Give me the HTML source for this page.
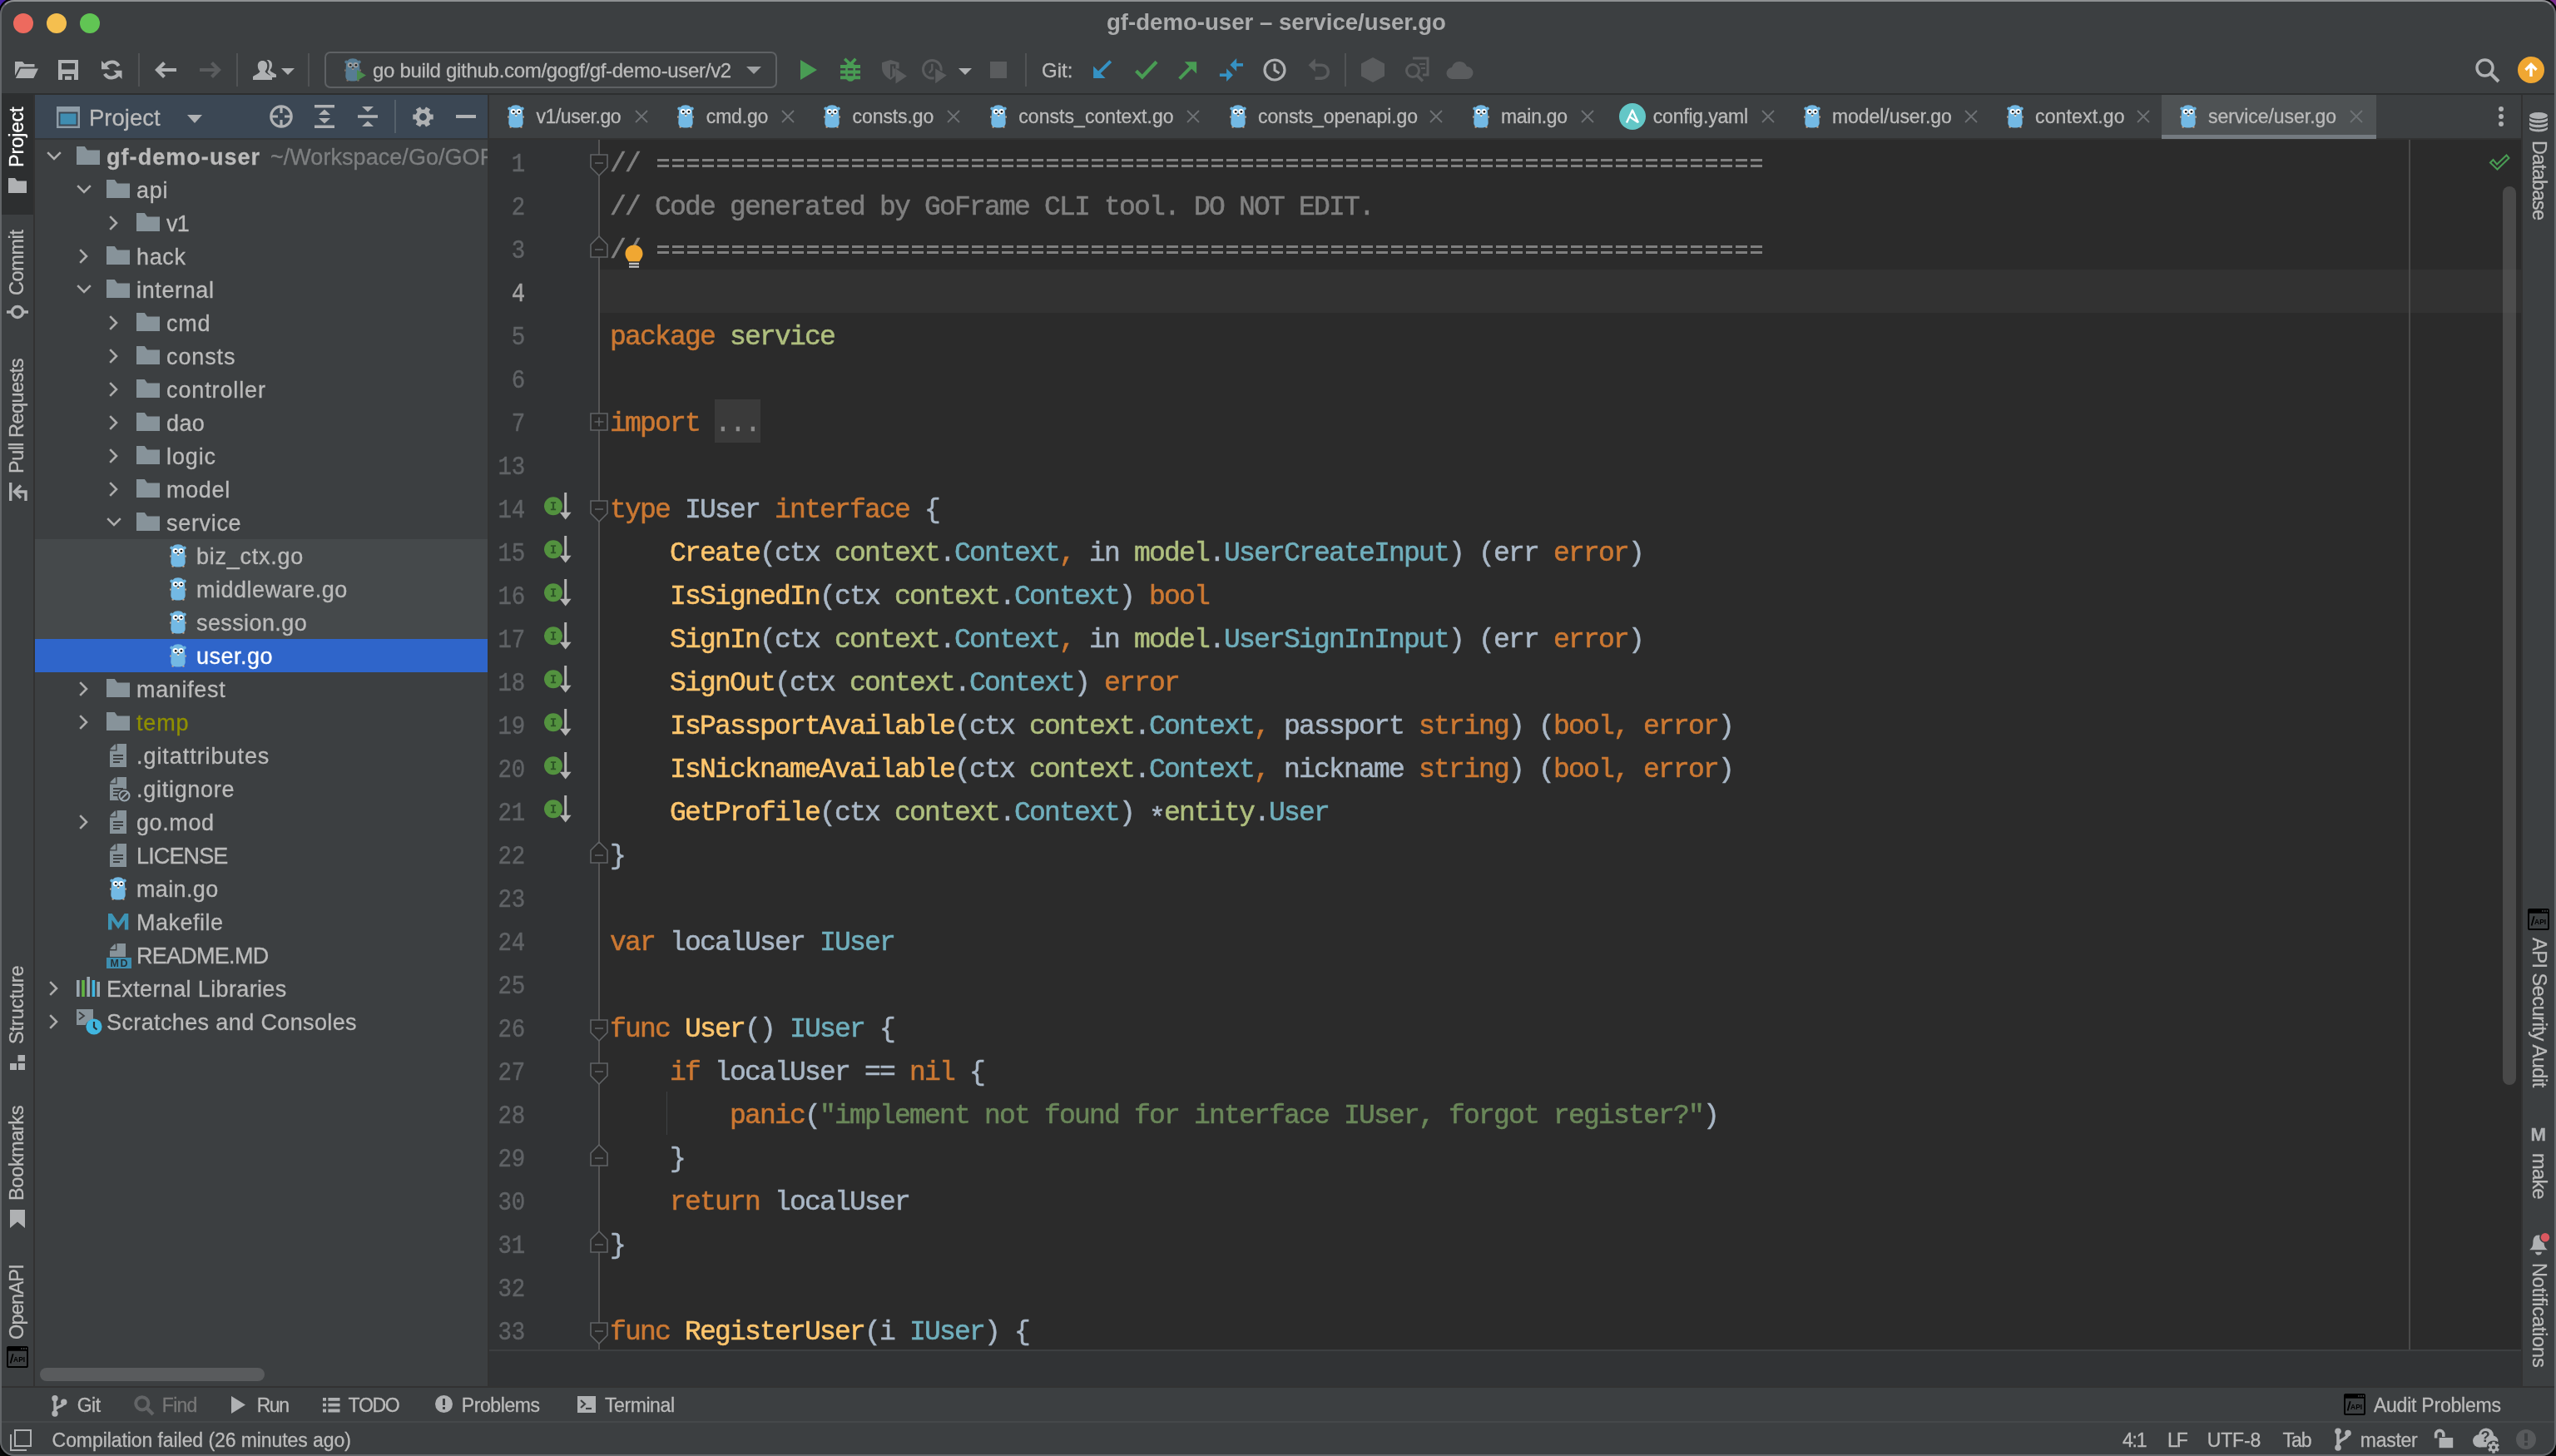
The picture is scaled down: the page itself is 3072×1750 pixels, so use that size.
<!DOCTYPE html><html><head><meta charset="utf-8"><title>gf-demo-user</title><style>
*{box-sizing:border-box;margin:0;padding:0}
html,body{width:3072px;height:1750px;overflow:hidden;background:#0a0a0a}
body{font-family:"Liberation Sans",sans-serif;color:#bbbbbb;position:relative;-webkit-text-stroke:0.3px}
.a{position:absolute}
.t{position:absolute;white-space:pre;line-height:1}
svg{position:absolute;overflow:visible}
#win{position:absolute;left:0;top:0;width:3072px;height:1750px;background:#3c3f41;border-radius:17px;overflow:hidden;will-change:transform}
.code{position:absolute;left:733px;white-space:pre;font-family:"Liberation Mono",monospace;font-size:33px;line-height:52px;height:52px;color:#a9b7c6;letter-spacing:-1.804px;-webkit-text-stroke:0.55px}
.ln{position:absolute;left:586.5px;width:44px;text-align:right;white-space:pre;font-family:"Liberation Mono",monospace;font-size:30.5px;letter-spacing:-0.3px;transform:scaleX(0.9);transform-origin:100% 50%;-webkit-text-stroke:0.4px;line-height:52px;height:52px;color:#606366}
.k{color:#cc7832}.c{color:#808080}.p{color:#afbf7e}.y{color:#6fafbd}.f{color:#ffc66d}.s{color:#6a8759}
.row{position:absolute;left:42px;width:544px;height:40px}
.tt{position:absolute;white-space:pre;font-size:27px;line-height:40px;height:40px;color:#bbbbbb;letter-spacing:0.3px;margin-top:0.6px}
.tab{position:absolute;white-space:pre;font-size:23px;line-height:52px;height:52px;top:114px;color:#bbbbbb}
.st{position:absolute;white-space:pre;font-size:22px;line-height:1;color:#bbbbbb;transform-origin:0 0}
</style></head><body>
<svg width="0" height="0" style="position:absolute"><defs>
<symbol id="gopher" viewBox="0 0 20 28">
<circle cx="2.3" cy="4.6" r="2" fill="#6db4de"/><circle cx="17.7" cy="4.6" r="2" fill="#6db4de"/>
<ellipse cx="0.9" cy="14.6" rx="0.9" ry="1.4" fill="#c9a78c"/><ellipse cx="19.1" cy="14.6" rx="0.9" ry="1.4" fill="#c9a78c"/>
<ellipse cx="3.7" cy="26.7" rx="1.3" ry="1.1" fill="#c9a78c"/><ellipse cx="16.4" cy="26.7" rx="1.3" ry="1.1" fill="#c9a78c"/>
<path d="M1.8,11 C1.8,3.2 5,0.2 10,0.2 C15,0.2 18.2,3.2 18.2,11 L18.7,21.5 C18.7,26 15.2,27.6 10,27.6 C4.8,27.6 1.3,26 1.3,21.5 Z" fill="#73b9e4"/>
<circle cx="6.8" cy="8.1" r="3.1" fill="#fff"/><circle cx="13.5" cy="8.1" r="3.1" fill="#fff"/>
<circle cx="7.2" cy="8.3" r="1.3" fill="#000"/><circle cx="13.9" cy="8.3" r="1.3" fill="#000"/>
<ellipse cx="10.2" cy="12.7" rx="1.5" ry="1.1" fill="#e6d2b4"/>
<ellipse cx="10.2" cy="11.4" rx="1.2" ry="0.9" fill="#3a2e2a"/>
<rect x="9.6" y="12.8" width="1.2" height="1.2" fill="#fff"/>
</symbol>
<symbol id="folder" viewBox="0 0 28 22"><path d="M0,0 H9.8 L13,4.4 H28 V22 H0 Z" fill="#87939a"/></symbol>
<symbol id="file" viewBox="0 0 20 28"><path d="M8,0 H20 V28 H0 V8 Z" fill="#87939a"/><path d="M0,6.6 L6.6,0 V6.6 Z" fill="#87939a"/><path d="M7.2,0 V7.2 H0 V8.6 H8.6 V0 Z" fill="#3c3f41"/>
<rect x="4" y="13" width="12" height="2" fill="#3c3f41"/><rect x="4" y="17" width="12" height="2" fill="#3c3f41"/><rect x="4" y="21" width="8" height="2" fill="#3c3f41"/></symbol>
<symbol id="chv-d" viewBox="0 0 18 11"><path d="M1.2,1.2 L9,9 L16.8,1.2" fill="none" stroke="#adadad" stroke-width="2.6"/></symbol>
<symbol id="chv-r" viewBox="0 0 11 18"><path d="M1.2,1.2 L9,9 L1.2,16.8" fill="none" stroke="#adadad" stroke-width="2.6"/></symbol>
<symbol id="x" viewBox="0 0 16 16"><path d="M1,1 L15,15 M15,1 L1,15" stroke="#6e7275" stroke-width="1.8" fill="none"/></symbol>
<symbol id="impl" viewBox="0 0 34 34">
<circle cx="11" cy="16.2" r="11" fill="#53923f"/>
<path d="M7.9,11.2 H14.1 V13 H12.1 V19.4 H14.1 V21.2 H7.9 V19.4 H9.9 V13 H7.9 Z" fill="#2c5426"/>
<path d="M25.7,0 V25" stroke="#b4b4b4" stroke-width="3"/><path d="M18.8,23.8 H32.6 L25.7,32.6 Z" fill="#b4b4b4"/>
</symbol>
<symbol id="fold-s" viewBox="0 0 22 27"><path d="M1,1 H21 V16 L11,26 L1,16 Z" fill="#2b2b2b" stroke="#606366" stroke-width="1.6"/><path d="M6,11 H16" stroke="#606366" stroke-width="1.6"/></symbol>
<symbol id="fold-e" viewBox="0 0 22 27"><path d="M1,26 H21 V11 L11,1 L1,11 Z" fill="#2b2b2b" stroke="#606366" stroke-width="1.6"/><path d="M6,17 H16" stroke="#606366" stroke-width="1.6"/></symbol>
<symbol id="fold-p" viewBox="0 0 22 22"><path d="M1,1 H21 V21 H1 Z" fill="#2b2b2b" stroke="#606366" stroke-width="1.6"/><path d="M5.5,11 H16.5 M11,5.5 V16.5" stroke="#606366" stroke-width="1.6"/></symbol>
<symbol id="api" viewBox="0 0 26 26"><rect x="1" y="1" width="24" height="24" rx="1.6" fill="none" stroke="#000" stroke-width="2"/><rect x="0.4" y="0.4" width="25.2" height="5.4" rx="1" fill="#000"/>
<rect x="17.2" y="2.2" width="1.5" height="1.5" fill="#55585a"/><rect x="20" y="2.2" width="1.5" height="1.5" fill="#55585a"/><rect x="22.8" y="2.2" width="1.5" height="1.5" fill="#55585a"/>
<path d="M4.6,20.4 L7.7,9.3" stroke="#000" stroke-width="1.8"/>
<text x="8.1" y="18.7" font-family="Liberation Sans" font-weight="700" font-size="9.6" fill="#000" textLength="14" lengthAdjust="spacingAndGlyphs" style="-webkit-text-stroke:0">API</text></symbol>
</defs></svg>
<div class="a" style="left:0;top:0;width:30px;height:30px;background:#4520a2"></div>
<div class="a" style="left:3042px;top:0;width:30px;height:30px;background:#7a2d8f"></div>
<div id="win">
<div class="a" style="left:16px;top:16px;width:24px;height:24px;border-radius:50%;background:#ed6a5e"></div>
<div class="a" style="left:56px;top:16px;width:24px;height:24px;border-radius:50%;background:#f5bf4f"></div>
<div class="a" style="left:96px;top:16px;width:24px;height:24px;border-radius:50%;background:#61c554"></div>
<div class="t" id="title" style="left:1330px;top:13px;font-size:27.6px;font-weight:700;color:#abacad;-webkit-text-stroke:0">gf-demo-user – service/user.go</div>
<svg style="left:18px;top:74px" width="28" height="20" viewBox="0 0 28 20"><path d="M0,0 H9 L11.5,3 H23.5 V6.5 H5.5 L0,17 Z" fill="#afb1b3"/><path d="M6.8,8.5 H28 L22.3,20 H0.8 Z" fill="#afb1b3"/></svg>
<svg style="left:70px;top:72px" width="24" height="24" viewBox="0 0 24 24"><path d="M0,0 H24 V24 H19 V17 H5 V24 H0 Z M4,4 V11.5 H20 V4 Z" fill="#afb1b3" fill-rule="evenodd"/><rect x="8" y="19.5" width="8" height="4.5" fill="#afb1b3"/></svg>
<svg style="left:122px;top:72px" width="24.5" height="24" viewBox="0 0 24.5 24"><path d="M3.4,10.2 A9.3,9.3 0 0 1 20.6,7.2" fill="none" stroke="#afb1b3" stroke-width="4.2"/><path d="M21.1,13.8 A9.3,9.3 0 0 1 3.9,16.8" fill="none" stroke="#afb1b3" stroke-width="4.2"/><path d="M0,1 V11.2 H10.2 Z" fill="#afb1b3"/><path d="M24.5,23 V12.8 H14.3 Z" fill="#afb1b3"/></svg>
<div class="a" style="left:166px;top:64px;width:2px;height:40px;background:#515355"></div>
<svg style="left:186px;top:74px" width="26" height="20" viewBox="0 0 26 20"><path d="M26,10 H3.5 M11.5,1.4 L3,10 L11.5,18.6" fill="none" stroke="#afb1b3" stroke-width="4.2"/></svg>
<svg style="left:240px;top:74px" width="26" height="20" viewBox="0 0 26 20"><path d="M0,10 H22.5 M14.5,1.4 L23,10 L14.5,18.6" fill="none" stroke="#5a5c5e" stroke-width="4.2"/></svg>
<div class="a" style="left:284px;top:64px;width:2px;height:40px;background:#515355"></div>
<svg style="left:304px;top:72px" width="28" height="24" viewBox="0 0 28 24"><path d="M17.5,0 C21,0 23,2.5 23,6 C23,9 21.8,11 20.5,12 C21,14.5 24,15 28,17.5 V21 H22 C21.5,17 17.5,16.3 17.4,14 C19,12 19.6,9.5 19.6,6.5 C19.6,3.5 18.6,1.5 16.5,0.3 Z" fill="#afb1b3"/><path d="M11.5,1 C15.2,1 17.2,3.6 17.2,7 C17.2,10.2 16,12.3 14.6,13.5 C15,16.5 19,17 23,20 V24 H0 V20 C4,17 8,16.5 8.4,13.5 C7,12.3 5.8,10.2 5.8,7 C5.8,3.6 7.8,1 11.5,1 Z" fill="#afb1b3"/></svg>
<svg style="left:338px;top:82px" width="16" height="8" viewBox="0 0 16 8"><path d="M0,0 H16 L8,8 Z" fill="#afb1b3"/></svg>
<div class="a" style="left:370px;top:64px;width:2px;height:40px;background:#515355"></div>
<div class="a" style="left:390px;top:62px;width:544px;height:44px;border:2px solid #5e6164;border-radius:7px"></div>
<svg style="left:414px;top:70px;opacity:.5" width="20" height="28"><use href="#gopher"/></svg>
<svg style="left:429px;top:84px" width="11" height="13" viewBox="0 0 11 13"><path d="M0,0 L11,6.5 L0,13 Z" fill="#4a8a4e"/></svg>
<div class="t" id="runcfg" style="left:448px;top:71px;font-size:24px;line-height:28px;letter-spacing:-0.3px">go build github.com/gogf/gf-demo-user/v2</div>
<svg style="left:897px;top:80px" width="18" height="9" viewBox="0 0 18 9"><path d="M0,0 H18 L9,9 Z" fill="#9da0a2"/></svg>
<svg style="left:962px;top:72px" width="20" height="24" viewBox="0 0 20 24"><path d="M0,0 L20,12 L0,24 Z" fill="#499c54"/></svg>
<svg style="left:1010px;top:70px" width="24" height="28" viewBox="0 0 24 28"><path d="M5.2,0.7 L12,7.4 L18.4,0.7" stroke="#499c54" stroke-width="3.6" fill="none"/><path d="M6.2,12 C6.2,7.5 9,5.2 12.1,5.2 C15.2,5.2 18,7.5 18,12 V21 C18,25.6 15.2,27.8 12.1,27.8 C9,27.8 6.2,25.6 6.2,21 Z" fill="#499c54"/><path d="M0,10 H24 M0,16.6 H24 M0,23.2 H24" stroke="#499c54" stroke-width="4"/><path d="M8.8,13.3 H15.4 M8.8,19.9 H15.4" stroke="#3c3f41" stroke-width="2.6"/></svg>
<svg style="left:1059.7px;top:71.8px" width="30" height="29" viewBox="0 0 30 29"><path d="M0,3.2 L10.3,0 L20.6,3.2 V10.5 H16.5 V19 L10.3,24 C4,20 0,15.5 0,9 Z" fill="#5a5c5e"/><path d="M10,5.2 H16.5 V10.4 H14 V7.6 H12.4 V19.6 L10,21.2 Z" fill="#3c3f41"/><path d="M16.5,10.6 L30,19.4 L16.5,28.4 Z" fill="#5a5c5e"/></svg>
<svg style="left:1107.8px;top:70.7px" width="32" height="30" viewBox="0 0 32 30"><circle cx="12.3" cy="12.3" r="10.8" fill="none" stroke="#5a5c5e" stroke-width="3"/><path d="M12.3,5.8 V12.6 L8.8,16.8" fill="none" stroke="#5a5c5e" stroke-width="2.4"/><path d="M14.6,9 L32,19.5 L14.6,30 Z" fill="#3c3f41"/><path d="M16.2,11.6 L29.8,19.5 L16.2,29.2 Z" fill="#5a5c5e"/></svg>
<svg style="left:1152px;top:82px" width="16" height="8" viewBox="0 0 16 8"><path d="M0,0 H16 L8,8 Z" fill="#afb1b3"/></svg>
<div class="a" style="left:1190px;top:74px;width:20px;height:20px;background:#5a5c5e"></div>
<div class="a" style="left:1232px;top:64px;width:2px;height:40px;background:#515355"></div>
<div class="t" id="gitlbl" style="left:1252px;top:72px;font-size:24px;line-height:26px">Git:</div>
<svg style="left:0;top:0" width="3072" height="120" viewBox="0 0 3072 120"><path d="M1334.8,73.6 L1320.5,87.6" stroke="#3592c4" stroke-width="4" fill="none"/><path d="M1314.1,79.5 V94.1 H1328.6 Z" fill="#3592c4"/><path d="M1365.5,85.3 L1372.8,92.4 L1390,74.2" stroke="#499c54" stroke-width="4.2" fill="none"/><path d="M1417.6,94.6 L1432,80.2" stroke="#499c54" stroke-width="4" fill="none"/><path d="M1423.6,74.2 H1438.1 V88.6 Z" fill="#499c54"/><path d="M1494,77.9 H1484" stroke="#3592c4" stroke-width="3.6" fill="none"/><path d="M1478.4,77.9 L1486.2,70 V85.8 Z" fill="#3592c4"/><path d="M1465.9,90.2 H1476" stroke="#3592c4" stroke-width="3.6" fill="none"/><path d="M1481.9,90.2 L1474.1,82.3 V98.1 Z" fill="#3592c4"/><path d="M1580,78.3 H1588.5 A7.9,7.9 0 0 1 1588.5,94.1 H1580.5" stroke="#5a5c5e" stroke-width="3.6" fill="none"/><path d="M1572.5,78.3 L1580.9,70.3 V86.3 Z" fill="#5a5c5e"/></svg>
<svg style="left:1518px;top:70px" width="28" height="28" viewBox="0 0 28 28"><circle cx="14" cy="14" r="12" fill="none" stroke="#afb1b3" stroke-width="3.2"/><path d="M14,6.5 V14.5 L19.5,18" fill="none" stroke="#afb1b3" stroke-width="3"/></svg>
<div class="a" style="left:1616px;top:64px;width:2px;height:40px;background:#515355"></div>
<svg style="left:1636px;top:69px" width="28" height="30" viewBox="0 0 28 30"><path d="M14,0 L28,7.5 V22.5 L14,30 L0,22.5 V7.5 Z" fill="#5a5c5e"/></svg>
<svg style="left:1688px;top:70px" width="28" height="28" viewBox="0 0 28 28"><path d="M10,0 H28 V20 H22" fill="none" stroke="#5a5c5e" stroke-width="3"/><circle cx="10" cy="15" r="7.5" fill="none" stroke="#5a5c5e" stroke-width="3"/><path d="M15,20.5 L22,27.5" stroke="#5a5c5e" stroke-width="3.4"/><path d="M18,7 H25 M20,12 H25" stroke="#5a5c5e" stroke-width="2"/></svg>
<svg style="left:1738px;top:73px" width="32" height="22" viewBox="0 0 32 22"><path d="M8,22 A7,7 0 0 1 7,8 A9.5,9.5 0 0 1 25,7 A7.5,7.5 0 0 1 25,22 Z" fill="#5a5c5e"/></svg>
<svg style="left:2975px;top:70px" width="30" height="30" viewBox="0 0 30 30"><circle cx="11.5" cy="11.5" r="9.5" fill="none" stroke="#afb1b3" stroke-width="3.4"/><path d="M18.5,18.5 L28,28" stroke="#afb1b3" stroke-width="4"/></svg>
<div class="a" style="left:3026px;top:68px;width:32px;height:32px;border-radius:50%;background:#f0a732"></div>
<svg style="left:3033px;top:75px" width="18" height="18" viewBox="0 0 18 18"><path d="M9,17 V3 M2.5,9 L9,2.5 L15.5,9" fill="none" stroke="#fff" stroke-width="3.4"/></svg>
<div class="a" style="left:0;top:112px;width:3072px;height:2px;background:#2d2f30"></div>
<div class="a" style="left:0;top:114px;width:40px;height:1552px;background:#3c3f41"></div>
<div class="a" style="left:40px;top:114px;width:2px;height:1552px;background:#323232"></div>
<div class="a" style="left:2px;top:114px;width:38px;height:144px;background:#2d2f30"></div>
<div class="st" id="sl1" style="left:9px;top:200.8px;transform:rotate(-90deg);font-size:23.5px;letter-spacing:-0.091px;color:#ffffff">Project</div>
<svg style="left:10px;top:214px" width="22" height="18" viewBox="0 0 22 18"><path d="M0,0 H8 L10.5,3.5 H22 V18 H0 Z" fill="#afb1b3"/></svg>
<div class="st" id="sl2" style="left:9px;top:354.5px;transform:rotate(-90deg);font-size:23.5px;letter-spacing:-0.407px;color:#bbbbbb">Commit</div>
<svg style="left:8px;top:366px" width="26" height="18" viewBox="0 0 26 18"><circle cx="13" cy="9" r="6.5" fill="none" stroke="#afb1b3" stroke-width="3.4"/><path d="M0,9 H6.5 M19.5,9 H26" stroke="#afb1b3" stroke-width="3.4"/></svg>
<div class="st" id="sl3" style="left:9px;top:568.5px;transform:rotate(-90deg);font-size:23.5px;letter-spacing:-0.538px;color:#bbbbbb">Pull Requests</div>
<svg style="left:11px;top:580px" width="22" height="22" viewBox="0 0 22 22"><path d="M0,0 H3.4 V22 H0 Z" fill="#afb1b3"/><path d="M20,22 V11 H8" fill="none" stroke="#afb1b3" stroke-width="3.4"/><path d="M14,3.5 L6.5,11 L14,18.5" fill="none" stroke="#afb1b3" stroke-width="3.4"/></svg>
<div class="st" id="sl4" style="left:9px;top:1254.5px;transform:rotate(-90deg);font-size:23.5px;letter-spacing:-0.094px;color:#bbbbbb">Structure</div>
<svg style="left:12px;top:1268px" width="18" height="18" viewBox="0 0 18 18"><rect x="9.5" y="0" width="8.5" height="7.5" fill="#afb1b3"/><rect x="0" y="10" width="8" height="8" fill="#afb1b3"/><rect x="10" y="10" width="8" height="8" fill="#afb1b3"/></svg>
<div class="st" id="sl5" style="left:9px;top:1442.5px;transform:rotate(-90deg);font-size:23.5px;letter-spacing:-0.393px;color:#bbbbbb">Bookmarks</div>
<svg style="left:12px;top:1454px" width="18" height="22" viewBox="0 0 18 22"><path d="M0,0 H18 V22 L9,14.5 L0,22 Z" fill="#afb1b3"/></svg>
<div class="st" id="sl6" style="left:9px;top:1609.5px;transform:rotate(-90deg);font-size:23.5px;letter-spacing:-0.767px;color:#bbbbbb">OpenAPI</div>
<svg style="left:8px;top:1618px" width="26" height="26"><use href="#api"/></svg>
<div class="a" style="left:42px;top:114px;width:544px;height:52px;background:#3b4754"></div>
<div class="a" style="left:42px;top:166px;width:544px;height:2px;background:#323537"></div>
<div class="a" style="left:586px;top:114px;width:2px;height:1552px;background:#323232"></div>
<svg style="left:68px;top:128px" width="28" height="26" viewBox="0 0 28 26"><rect x="0" y="0" width="28" height="26" fill="#8e9ca7"/><rect x="2.5" y="6.5" width="23" height="17" fill="#3b4754"/><rect x="4.5" y="8.5" width="19" height="13" fill="#3f8db1"/></svg>
<div class="t" id="projhdr" style="left:107px;top:126.5px;font-size:27.5px;line-height:30px">Project</div>
<svg style="left:225px;top:138px" width="18" height="10" viewBox="0 0 18 10"><path d="M0,0 H18 L9,10 Z" fill="#afb1b3"/></svg>
<svg style="left:324px;top:126px" width="28" height="28" viewBox="0 0 28 28"><circle cx="14" cy="14" r="12.2" fill="none" stroke="#afb1b3" stroke-width="3.2"/><path d="M14,1 V10 M14,18 V27 M1,14 H10 M18,14 H27" stroke="#afb1b3" stroke-width="3.2"/></svg>
<svg style="left:378px;top:126px" width="24" height="28" viewBox="0 0 24 28"><path d="M0,0 H24 V3.6 H0 Z M0,24.4 H24 V28 H0 Z" fill="#afb1b3"/><path d="M5,12 H19 L12,5.5 Z M5,16 H19 L12,22.5 Z" fill="#afb1b3"/></svg>
<svg style="left:430px;top:126px" width="24" height="28" viewBox="0 0 24 28"><path d="M0,12.2 H24 V15.8 H0 Z" fill="#afb1b3"/><path d="M5,2 H19 L12,8.5 Z M5,26 H19 L12,19.5 Z" fill="#afb1b3"/></svg>
<div class="a" style="left:474px;top:120px;width:2px;height:40px;background:#55606a"></div>
<svg style="left:495.5px;top:127.5px" width="25" height="25" viewBox="-13.3 -13.3 26.6 26.6"><circle cx="0" cy="0" r="7.2" fill="none" stroke="#afb1b3" stroke-width="5"/><rect x="-3.2" y="-13" width="6.4" height="6" fill="#afb1b3" transform="rotate(30)"/><rect x="-3.2" y="-13" width="6.4" height="6" fill="#afb1b3" transform="rotate(90)"/><rect x="-3.2" y="-13" width="6.4" height="6" fill="#afb1b3" transform="rotate(150)"/><rect x="-3.2" y="-13" width="6.4" height="6" fill="#afb1b3" transform="rotate(210)"/><rect x="-3.2" y="-13" width="6.4" height="6" fill="#afb1b3" transform="rotate(270)"/><rect x="-3.2" y="-13" width="6.4" height="6" fill="#afb1b3" transform="rotate(330)"/></svg>
<div class="a" style="left:548px;top:138px;width:24px;height:4px;background:#afb1b3"></div>
<div class="a" style="left:42px;top:648px;width:544px;height:120px;background:#45494b"></div>
<div class="a" style="left:42px;top:768px;width:544px;height:40px;background:#2f65ca"></div>
<div class="a" id="tree" style="left:0;top:0;width:586px;height:1666px;overflow:hidden">
<svg style="left:56px;top:182px" width="18" height="11"><use href="#chv-d"/></svg>
<svg style="left:92px;top:176px" width="28" height="22"><use href="#folder"/></svg>
<div class="tt" id="tr0" style="left:128px;top:168px;color:#bbbbbb;"><b style="letter-spacing:1.05px">gf-demo-user</b><span style="color:#7d7f80;letter-spacing:0.05px;margin-left:4.3px"> ~/Workspace/Go/GOPATH</span></div>
<svg style="left:92px;top:222px" width="18" height="11"><use href="#chv-d"/></svg>
<svg style="left:128px;top:216px" width="28" height="22"><use href="#folder"/></svg>
<div class="tt" id="tr1" style="left:164px;top:208px;color:#bbbbbb;letter-spacing:0.690px;">api</div>
<svg style="left:131px;top:259px" width="11" height="18"><use href="#chv-r"/></svg>
<svg style="left:164px;top:256px" width="28" height="22"><use href="#folder"/></svg>
<div class="tt" id="tr2" style="left:200px;top:248px;color:#bbbbbb;letter-spacing:-0.708px;">v1</div>
<svg style="left:95px;top:299px" width="11" height="18"><use href="#chv-r"/></svg>
<svg style="left:128px;top:296px" width="28" height="22"><use href="#folder"/></svg>
<div class="tt" id="tr3" style="left:164px;top:288px;color:#bbbbbb;letter-spacing:0.617px;">hack</div>
<svg style="left:92px;top:342px" width="18" height="11"><use href="#chv-d"/></svg>
<svg style="left:128px;top:336px" width="28" height="22"><use href="#folder"/></svg>
<div class="tt" id="tr4" style="left:164px;top:328px;color:#bbbbbb;letter-spacing:0.631px;">internal</div>
<svg style="left:131px;top:379px" width="11" height="18"><use href="#chv-r"/></svg>
<svg style="left:164px;top:376px" width="28" height="22"><use href="#folder"/></svg>
<div class="tt" id="tr5" style="left:200px;top:368px;color:#bbbbbb;letter-spacing:0.797px;">cmd</div>
<svg style="left:131px;top:419px" width="11" height="18"><use href="#chv-r"/></svg>
<svg style="left:164px;top:416px" width="28" height="22"><use href="#folder"/></svg>
<div class="tt" id="tr6" style="left:200px;top:408px;color:#bbbbbb;letter-spacing:0.894px;">consts</div>
<svg style="left:131px;top:459px" width="11" height="18"><use href="#chv-r"/></svg>
<svg style="left:164px;top:456px" width="28" height="22"><use href="#folder"/></svg>
<div class="tt" id="tr7" style="left:200px;top:448px;color:#bbbbbb;letter-spacing:0.885px;">controller</div>
<svg style="left:131px;top:499px" width="11" height="18"><use href="#chv-r"/></svg>
<svg style="left:164px;top:496px" width="28" height="22"><use href="#folder"/></svg>
<div class="tt" id="tr8" style="left:200px;top:488px;color:#bbbbbb;letter-spacing:0.417px;">dao</div>
<svg style="left:131px;top:539px" width="11" height="18"><use href="#chv-r"/></svg>
<svg style="left:164px;top:536px" width="28" height="22"><use href="#folder"/></svg>
<div class="tt" id="tr9" style="left:200px;top:528px;color:#bbbbbb;letter-spacing:0.894px;">logic</div>
<svg style="left:131px;top:579px" width="11" height="18"><use href="#chv-r"/></svg>
<svg style="left:164px;top:576px" width="28" height="22"><use href="#folder"/></svg>
<div class="tt" id="tr10" style="left:200px;top:568px;color:#bbbbbb;letter-spacing:0.652px;">model</div>
<svg style="left:128px;top:622px" width="18" height="11"><use href="#chv-d"/></svg>
<svg style="left:164px;top:616px" width="28" height="22"><use href="#folder"/></svg>
<div class="tt" id="tr11" style="left:200px;top:608px;color:#bbbbbb;letter-spacing:0.683px;">service</div>
<svg style="left:204px;top:654px" width="20" height="28"><use href="#gopher"/></svg>
<div class="tt" id="tr12" style="left:236px;top:648px;color:#bbbbbb;letter-spacing:0.743px;">biz_ctx.go</div>
<svg style="left:204px;top:694px" width="20" height="28"><use href="#gopher"/></svg>
<div class="tt" id="tr13" style="left:236px;top:688px;color:#bbbbbb;letter-spacing:0.477px;">middleware.go</div>
<svg style="left:204px;top:734px" width="20" height="28"><use href="#gopher"/></svg>
<div class="tt" id="tr14" style="left:236px;top:728px;color:#bbbbbb;letter-spacing:0.402px;">session.go</div>
<svg style="left:204px;top:774px" width="20" height="28"><use href="#gopher"/></svg>
<div class="tt" id="tr15" style="left:236px;top:768px;color:#ffffff;letter-spacing:0.476px;">user.go</div>
<svg style="left:95px;top:819px" width="11" height="18"><use href="#chv-r"/></svg>
<svg style="left:128px;top:816px" width="28" height="22"><use href="#folder"/></svg>
<div class="tt" id="tr16" style="left:164px;top:808px;color:#bbbbbb;letter-spacing:0.657px;">manifest</div>
<svg style="left:95px;top:859px" width="11" height="18"><use href="#chv-r"/></svg>
<svg style="left:128px;top:856px" width="28" height="22"><use href="#folder"/></svg>
<div class="tt" id="tr17" style="left:164px;top:848px;color:#bbbbbb;letter-spacing:0.819px;"><span style="color:#8f8f00">temp</span></div>
<svg style="left:132px;top:894px" width="20" height="28"><use href="#file"/></svg>
<div class="tt" id="tr18" style="left:164px;top:888px;color:#bbbbbb;letter-spacing:0.945px;">.gitattributes</div>
<svg style="left:132px;top:934px" width="20" height="28"><use href="#file"/></svg>
<svg style="left:140.6px;top:948.4px" width="17" height="17" viewBox="0 0 17 17"><circle cx="8.5" cy="8.5" r="8.5" fill="#3c3f41"/><circle cx="8.5" cy="8.5" r="6" fill="none" stroke="#9aa7b0" stroke-width="2"/><path d="M4.2,12.8 L12.8,4.2" stroke="#9aa7b0" stroke-width="2"/></svg>
<div class="tt" id="tr19" style="left:164px;top:928px;color:#bbbbbb;letter-spacing:0.723px;">.gitignore</div>
<svg style="left:95px;top:979px" width="11" height="18"><use href="#chv-r"/></svg>
<svg style="left:132px;top:974px" width="20" height="28"><use href="#file"/></svg>
<div class="tt" id="tr20" style="left:164px;top:968px;color:#bbbbbb;letter-spacing:0.590px;">go.mod</div>
<svg style="left:132px;top:1014px" width="20" height="28"><use href="#file"/></svg>
<div class="tt" id="tr21" style="left:164px;top:1008px;color:#bbbbbb;letter-spacing:-0.863px;">LICENSE</div>
<svg style="left:132px;top:1054px" width="20" height="28"><use href="#gopher"/></svg>
<div class="tt" id="tr22" style="left:164px;top:1048px;color:#bbbbbb;letter-spacing:0.349px;">main.go</div>
<svg style="left:129.6px;top:1098px" width="24.3" height="19.6" viewBox="0 0 25 19.4" preserveAspectRatio="none"><path d="M0,19.4 V0 H4.8 L12.5,10.8 L20.2,0 H25 V19.4 H20.4 V7.6 L12.5,18.2 L4.6,7.6 V19.4 Z" fill="#3d94b5"/></svg>
<div class="tt" id="tr23" style="left:164px;top:1088px;color:#bbbbbb;letter-spacing:0.495px;">Makefile</div>
<svg style="left:128px;top:1134px" width="30" height="30" viewBox="0 0 30 30"><path d="M12,0 H23 V16 H4 V8 Z" fill="#87939a"/><path d="M4,6.5 L10.5,0 V6.5 Z" fill="#87939a"/><path d="M11,0 V7 H4 V8.4 H12.4 V0 Z" fill="#3c3f41"/><rect x="0" y="17" width="30" height="13" fill="#3e8eb0"/><text x="15" y="28" font-family="Liberation Sans" font-weight="700" font-size="12.5" text-anchor="middle" fill="#263238" textLength="21">MD</text></svg>
<div class="tt" id="tr24" style="left:164px;top:1128px;color:#bbbbbb;letter-spacing:-0.734px;">README.MD</div>
<svg style="left:59px;top:1179px" width="11" height="18"><use href="#chv-r"/></svg>
<svg style="left:92px;top:1174px" width="28" height="26" viewBox="0 0 28 26"><rect x="0" y="4" width="3.6" height="20" fill="#9aa7b0"/><rect x="6.2" y="4" width="3.6" height="20" fill="#62b543"/><rect x="12.4" y="0" width="3.6" height="24" fill="#9aa7b0"/><rect x="18.6" y="4" width="3.6" height="20" fill="#40b6e0"/><rect x="24.4" y="6" width="3.6" height="18" fill="#9aa7b0"/></svg>
<div class="tt" id="tr25" style="left:128px;top:1168px;color:#bbbbbb;letter-spacing:0.361px;">External Libraries</div>
<svg style="left:59px;top:1219px" width="11" height="18"><use href="#chv-r"/></svg>
<svg style="left:92px;top:1213px" width="32" height="32" viewBox="0 0 32 32"><path d="M0,0 H20 V12 C14,13 11,17 11,19 H0 Z" fill="#87939a"/><path d="M3,3.5 L9,8 L3,12.5" fill="none" stroke="#3c3f41" stroke-width="1.8"/><circle cx="21" cy="21" r="9.6" fill="#40b6e0"/><path d="M21,15 V21.5 L24.5,24.5" fill="none" stroke="#263238" stroke-width="2.2"/></svg>
<div class="tt" id="tr26" style="left:128px;top:1208px;color:#bbbbbb;letter-spacing:0.379px;">Scratches and Consoles</div>
</div>
<div class="a" style="left:48px;top:1644px;width:270px;height:16px;border-radius:8px;background:#595b5d"></div>
<div class="a" style="left:588px;top:114px;width:2442px;height:52px;background:#3c3f41"></div>
<div class="a" style="left:588px;top:166px;width:2442px;height:2px;background:#323232"></div>
<div class="a" style="left:2598px;top:114px;width:258px;height:52px;background:#4e5254"></div>
<div class="a" style="left:2598px;top:162px;width:258px;height:5px;background:#747a80"></div>
<svg style="left:610.0px;top:126px" width="20" height="28"><use href="#gopher"/></svg>
<div class="tab" id="tab0" style="left:644.5px;letter-spacing:-0.443px">v1/user.go</div>
<svg style="left:762.7px;top:132px" width="16" height="16"><use href="#x"/></svg>
<svg style="left:814.3px;top:126px" width="20" height="28"><use href="#gopher"/></svg>
<div class="tab" id="tab1" style="left:848.8px;letter-spacing:-0.171px">cmd.go</div>
<svg style="left:938.5px;top:132px" width="16" height="16"><use href="#x"/></svg>
<svg style="left:990.1px;top:126px" width="20" height="28"><use href="#gopher"/></svg>
<div class="tab" id="tab2" style="left:1024.6px;letter-spacing:-0.094px">consts.go</div>
<svg style="left:1138.0px;top:132px" width="16" height="16"><use href="#x"/></svg>
<svg style="left:1189.8px;top:126px" width="20" height="28"><use href="#gopher"/></svg>
<div class="tab" id="tab3" style="left:1224.3px;letter-spacing:0.053px">consts_context.go</div>
<svg style="left:1426.0px;top:132px" width="16" height="16"><use href="#x"/></svg>
<svg style="left:1477.5px;top:126px" width="20" height="28"><use href="#gopher"/></svg>
<div class="tab" id="tab4" style="left:1512px;letter-spacing:-0.065px">consts_openapi.go</div>
<svg style="left:1718.3px;top:132px" width="16" height="16"><use href="#x"/></svg>
<svg style="left:1769.5px;top:126px" width="20" height="28"><use href="#gopher"/></svg>
<div class="tab" id="tab5" style="left:1804px;letter-spacing:-0.289px">main.go</div>
<svg style="left:1900.0px;top:132px" width="16" height="16"><use href="#x"/></svg>
<div class="a" style="left:1945.8px;top:124px;width:32px;height:32px;border-radius:50%;background:#63c7c7"></div>
<svg style="left:1951.8px;top:130px" width="20" height="20" viewBox="0 0 20 20"><path d="M3,17.6 L10,2.6 L17,17.6 M6.6,10.2 L16.6,17" fill="none" stroke="#fff" stroke-width="2.4" stroke-linejoin="round"/></svg>
<div class="tab" id="tab6" style="left:1986.8px;letter-spacing:-0.202px">config.yaml</div>
<svg style="left:2116.5px;top:132px" width="16" height="16"><use href="#x"/></svg>
<svg style="left:2167.5px;top:126px" width="20" height="28"><use href="#gopher"/></svg>
<div class="tab" id="tab7" style="left:2202px;letter-spacing:-0.060px">model/user.go</div>
<svg style="left:2360.5px;top:132px" width="16" height="16"><use href="#x"/></svg>
<svg style="left:2411.5px;top:126px" width="20" height="28"><use href="#gopher"/></svg>
<div class="tab" id="tab8" style="left:2446px;letter-spacing:0.147px">context.go</div>
<svg style="left:2568.0px;top:132px" width="16" height="16"><use href="#x"/></svg>
<svg style="left:2619.5px;top:126px" width="20" height="28"><use href="#gopher"/></svg>
<div class="tab" id="tab9" style="left:2654px;letter-spacing:-0.046px">service/user.go</div>
<svg style="left:2824.0px;top:132px" width="16" height="16"><use href="#x"/></svg>
<div class="a" style="left:3002.5px;top:128px;width:6px;height:6px;border-radius:50%;background:#afb1b3"></div>
<div class="a" style="left:3002.5px;top:137px;width:6px;height:6px;border-radius:50%;background:#afb1b3"></div>
<div class="a" style="left:3002.5px;top:146.2px;width:6px;height:6px;border-radius:50%;background:#afb1b3"></div>
<div class="a" style="left:588px;top:168px;width:132px;height:1454px;background:#313335"></div>
<div class="a" style="left:720px;top:168px;width:2310px;height:1454px;background:#2b2b2b"></div>
<div class="a" style="left:720px;top:324px;width:2310px;height:52px;background:#323232"></div>
<div class="a" style="left:588px;top:1622px;width:2442px;height:44px;background:#313335"></div>
<div class="a" style="left:588px;top:1622px;width:2442px;height:1.5px;background:#3d3f41"></div>
<div class="a" style="left:719px;top:168px;width:2px;height:1454px;background:#555555"></div>
<div class="a" style="left:2895px;top:168px;width:2px;height:1454px;background:#4a4a4a"></div>
<div class="a" style="left:3008px;top:224px;width:16px;height:1080px;border-radius:8px;background:rgba(128,128,128,0.35)"></div>
<svg style="left:2991px;top:185px" width="26" height="20" viewBox="0 0 26 20"><path d="M2,10.5 L5.5,7 L10,12.5 L21.5,1.5 L24.5,5 L10.5,18.5 Z" fill="none" stroke="#499c54" stroke-width="2"/></svg>
<div class="a" style="left:859px;top:480px;width:55px;height:52px;background:#3a3a3a"></div>
<div class="a" style="left:801px;top:1312px;width:1px;height:52px;background:#3f4244"></div>
<div class="a" id="ed" style="left:0;top:0;width:3030px;height:1622px;overflow:hidden">
<div class="ln" style="top:172px;color:#606366">1</div>
<div class="code" id="L1" style="top:172px"><span class="c">// </span></div>
<div class="ln" style="top:224px;color:#606366">2</div>
<div class="code" id="L2" style="top:224px"><span class="c">// Code generated by GoFrame CLI tool. DO NOT EDIT.</span></div>
<div class="ln" style="top:276px;color:#606366">3</div>
<div class="code" id="L3" style="top:276px"><span class="c">// </span></div>
<div class="ln" style="top:328px;color:#a4a3a3">4</div>
<div class="ln" style="top:380px;color:#606366">5</div>
<div class="code" id="L5" style="top:380px"><span class="k">package</span> <span class="p">service</span></div>
<div class="ln" style="top:432px;color:#606366">6</div>
<div class="ln" style="top:484px;color:#606366">7</div>
<div class="code" id="L7" style="top:484px"><span class="k">import</span> <span style="color:#8c8c8c">...</span></div>
<div class="ln" style="top:536px;color:#606366">13</div>
<div class="ln" style="top:588px;color:#606366">14</div>
<div class="code" id="L14" style="top:588px"><span class="k">type</span> IUser <span class="k">interface</span> {</div>
<svg style="left:654px;top:592px" width="34" height="34"><use href="#impl"/></svg>
<div class="ln" style="top:640px;color:#606366">15</div>
<div class="code" id="L15" style="top:640px">    <span class="f">Create</span>(ctx <span class="p">context</span>.<span class="y">Context</span><span class="k">,</span> in <span class="p">model</span>.<span class="y">UserCreateInput</span>) (err <span class="k">error</span>)</div>
<svg style="left:654px;top:644px" width="34" height="34"><use href="#impl"/></svg>
<div class="ln" style="top:692px;color:#606366">16</div>
<div class="code" id="L16" style="top:692px">    <span class="f">IsSignedIn</span>(ctx <span class="p">context</span>.<span class="y">Context</span>) <span class="k">bool</span></div>
<svg style="left:654px;top:696px" width="34" height="34"><use href="#impl"/></svg>
<div class="ln" style="top:744px;color:#606366">17</div>
<div class="code" id="L17" style="top:744px">    <span class="f">SignIn</span>(ctx <span class="p">context</span>.<span class="y">Context</span><span class="k">,</span> in <span class="p">model</span>.<span class="y">UserSignInInput</span>) (err <span class="k">error</span>)</div>
<svg style="left:654px;top:748px" width="34" height="34"><use href="#impl"/></svg>
<div class="ln" style="top:796px;color:#606366">18</div>
<div class="code" id="L18" style="top:796px">    <span class="f">SignOut</span>(ctx <span class="p">context</span>.<span class="y">Context</span>) <span class="k">error</span></div>
<svg style="left:654px;top:800px" width="34" height="34"><use href="#impl"/></svg>
<div class="ln" style="top:848px;color:#606366">19</div>
<div class="code" id="L19" style="top:848px">    <span class="f">IsPassportAvailable</span>(ctx <span class="p">context</span>.<span class="y">Context</span><span class="k">,</span> passport <span class="k">string</span>) (<span class="k">bool,</span> <span class="k">error</span>)</div>
<svg style="left:654px;top:852px" width="34" height="34"><use href="#impl"/></svg>
<div class="ln" style="top:900px;color:#606366">20</div>
<div class="code" id="L20" style="top:900px">    <span class="f">IsNicknameAvailable</span>(ctx <span class="p">context</span>.<span class="y">Context</span><span class="k">,</span> nickname <span class="k">string</span>) (<span class="k">bool,</span> <span class="k">error</span>)</div>
<svg style="left:654px;top:904px" width="34" height="34"><use href="#impl"/></svg>
<div class="ln" style="top:952px;color:#606366">21</div>
<div class="code" id="L21" style="top:952px">    <span class="f">GetProfile</span>(ctx <span class="p">context</span>.<span class="y">Context</span>) <span style="position:relative;top:7px">*</span><span class="p">entity</span>.<span class="y">User</span></div>
<svg style="left:654px;top:956px" width="34" height="34"><use href="#impl"/></svg>
<div class="ln" style="top:1004px;color:#606366">22</div>
<div class="code" id="L22" style="top:1004px">}</div>
<div class="ln" style="top:1056px;color:#606366">23</div>
<div class="ln" style="top:1108px;color:#606366">24</div>
<div class="code" id="L24" style="top:1108px"><span class="k">var</span> localUser <span class="y">IUser</span></div>
<div class="ln" style="top:1160px;color:#606366">25</div>
<div class="ln" style="top:1212px;color:#606366">26</div>
<div class="code" id="L26" style="top:1212px"><span class="k">func</span> <span class="f">User</span>() <span class="y">IUser</span> {</div>
<div class="ln" style="top:1264px;color:#606366">27</div>
<div class="code" id="L27" style="top:1264px">    <span class="k">if</span> localUser == <span class="k">nil</span> {</div>
<div class="ln" style="top:1316px;color:#606366">28</div>
<div class="code" id="L28" style="top:1316px">        <span class="k">panic</span>(<span class="s">&quot;implement not found for interface IUser, forgot register?&quot;</span>)</div>
<div class="ln" style="top:1368px;color:#606366">29</div>
<div class="code" id="L29" style="top:1368px">    }</div>
<div class="ln" style="top:1420px;color:#606366">30</div>
<div class="code" id="L30" style="top:1420px">    <span class="k">return</span> localUser</div>
<div class="ln" style="top:1472px;color:#606366">31</div>
<div class="code" id="L31" style="top:1472px">}</div>
<div class="ln" style="top:1524px;color:#606366">32</div>
<div class="ln" style="top:1576px;color:#606366">33</div>
<div class="code" id="L33" style="top:1576px"><span class="k">func</span> <span class="f">RegisterUser</span>(i <span class="y">IUser</span>) {</div>
<div class="a" style="left:788px;top:190.9px;width:1332px;height:3.2px;background:repeating-linear-gradient(90deg,transparent 0,transparent 2.1px,#808080 2.1px,#808080 15.95px,transparent 15.95px,transparent 18px)"></div>
<div class="a" style="left:788px;top:197.9px;width:1332px;height:3.2px;background:repeating-linear-gradient(90deg,transparent 0,transparent 2.1px,#808080 2.1px,#808080 15.95px,transparent 15.95px,transparent 18px)"></div>
<div class="a" style="left:788px;top:294.9px;width:1332px;height:3.2px;background:repeating-linear-gradient(90deg,transparent 0,transparent 2.1px,#808080 2.1px,#808080 15.95px,transparent 15.95px,transparent 18px)"></div>
<div class="a" style="left:788px;top:301.9px;width:1332px;height:3.2px;background:repeating-linear-gradient(90deg,transparent 0,transparent 2.1px,#808080 2.1px,#808080 15.95px,transparent 15.95px,transparent 18px)"></div>
<svg style="left:709px;top:185px" width="22" height="27"><use href="#fold-s"/></svg>
<svg style="left:709px;top:601px" width="22" height="27"><use href="#fold-s"/></svg>
<svg style="left:709px;top:1225px" width="22" height="27"><use href="#fold-s"/></svg>
<svg style="left:709px;top:1277px" width="22" height="27"><use href="#fold-s"/></svg>
<svg style="left:709px;top:1589px" width="22" height="27"><use href="#fold-s"/></svg>
<svg style="left:709px;top:283px" width="22" height="27"><use href="#fold-e"/></svg>
<svg style="left:709px;top:1011px" width="22" height="27"><use href="#fold-e"/></svg>
<svg style="left:709px;top:1375px" width="22" height="27"><use href="#fold-e"/></svg>
<svg style="left:709px;top:1479px" width="22" height="27"><use href="#fold-e"/></svg>
<svg style="left:709px;top:496px" width="22" height="22"><use href="#fold-p"/></svg>
<svg style="left:751px;top:293.5px" width="22" height="29" viewBox="0 0 22 28" preserveAspectRatio="none"><path d="M11,0.5 C17,0.5 21.5,4.8 21.5,10.5 C21.5,14.5 19,16.5 17.5,19.5 H4.5 C3,16.5 0.5,14.5 0.5,10.5 C0.5,4.8 5,0.5 11,0.5 Z" fill="#f0a732"/><rect x="5" y="21" width="12" height="2.2" fill="#c4c4c4"/><rect x="5" y="24.6" width="12" height="2.2" fill="#c4c4c4"/></svg>
</div>
<div class="a" style="left:3030px;top:114px;width:2px;height:1552px;background:#323232"></div>
<div class="a" style="left:3032px;top:114px;width:40px;height:1552px;background:#3c3f41"></div>
<svg style="left:3040px;top:134.5px" width="22" height="24" viewBox="0 0 22 24"><ellipse cx="11" cy="4" rx="11" ry="4" fill="#afb1b3"/><path d="M0,6.5 C3,10.5 19,10.5 22,6.5 V9.8 C19,13.8 3,13.8 0,9.8 Z M0,12 C3,16 19,16 22,12 V15.3 C19,19.3 3,19.3 0,15.3 Z M0,17.5 C3,21.5 19,21.5 22,17.5 V20 C19,24.5 3,24.5 0,20 Z" fill="#afb1b3"/></svg>
<div class="st" id="sr1" style="left:3062.8px;top:168.5px;transform:rotate(90deg);font-size:23.5px;letter-spacing:-0.662px;">Database</div>
<svg style="left:3038px;top:1092px" width="26" height="26"><use href="#api"/></svg>
<div class="st" id="sr2" style="left:3062.8px;top:1126.5px;transform:rotate(90deg);font-size:23.5px;letter-spacing:-0.461px;">API Security Audit</div>
<div class="t" style="left:3041.6px;top:1352px;font-size:22.3px;font-weight:700;color:#afb1b3;line-height:24px">M</div>
<div class="st" id="sr3" style="left:3062.8px;top:1386px;transform:rotate(90deg);font-size:23.5px;letter-spacing:-0.616px;">make</div>
<svg style="left:3039px;top:1483px" width="24" height="27" viewBox="0 0 24 27"><path d="M12,1.5 C17,1.5 18.6,6 18.6,10 C18.6,15 20,17 23,19.2 H1 C4,17 5.4,15 5.4,10 C5.4,6 7,1.5 12,1.5 Z" fill="#afb1b3"/><path d="M8,21.8 H16 C15.5,24.5 13.8,25.6 12,25.6 C10.2,25.6 8.5,24.5 8,21.8 Z" fill="#afb1b3"/><circle cx="20" cy="4.2" r="6.8" fill="#3c3f41"/><circle cx="20" cy="4.2" r="5.2" fill="#db5860"/></svg>
<div class="st" id="sr4" style="left:3062.8px;top:1517.5px;transform:rotate(90deg);font-size:23.5px;letter-spacing:-0.192px;">Notifications</div>
<div class="a" style="left:0;top:1666px;width:3072px;height:2px;background:#323232"></div>
<div class="a" style="left:0;top:1668px;width:3072px;height:40px;background:#3c3f41"></div>
<div class="a" style="left:0;top:1708px;width:3072px;height:2px;background:#45484a"></div>
<div class="t" id="bt0" style="left:92.7px;top:1676px;font-size:23px;line-height:26px;color:#bbbbbb;letter-spacing:-0.530px">Git</div>
<div class="t" id="bt1" style="left:194.8px;top:1676px;font-size:23px;line-height:26px;color:#777777;letter-spacing:-0.711px">Find</div>
<div class="t" id="bt2" style="left:308.7px;top:1676px;font-size:23px;line-height:26px;color:#bbbbbb;letter-spacing:-1.431px">Run</div>
<div class="t" id="bt3" style="left:418.6px;top:1676px;font-size:23px;line-height:26px;color:#bbbbbb;letter-spacing:-1.331px">TODO</div>
<div class="t" id="bt4" style="left:554.8px;top:1676px;font-size:23px;line-height:26px;color:#bbbbbb;letter-spacing:-0.406px">Problems</div>
<div class="t" id="bt5" style="left:726.9px;top:1676px;font-size:23px;line-height:26px;color:#bbbbbb;letter-spacing:-0.402px">Terminal</div>
<svg style="left:62px;top:1676.5px" width="19" height="26" viewBox="0 0 19 26"><circle cx="4" cy="3.8" r="3.7" fill="#afb1b3"/><circle cx="4" cy="22" r="3.7" fill="#afb1b3"/><circle cx="14.8" cy="8.2" r="3.7" fill="#afb1b3"/><path d="M4,3.5 V22 M14.8,8.2 C14.8,15 4,12.5 4,19" fill="none" stroke="#afb1b3" stroke-width="3.4"/></svg>
<svg style="left:161px;top:1677px" width="24" height="24" viewBox="0 0 24 24"><circle cx="9.8" cy="9.8" r="7.6" fill="none" stroke="#626466" stroke-width="4"/><path d="M15.5,15.5 L23,23" stroke="#626466" stroke-width="4.2"/></svg>
<svg style="left:278px;top:1678px" width="17" height="21" viewBox="0 0 17 21"><path d="M0,0 L17,10.5 L0,21 Z" fill="#afb1b3"/></svg>
<svg style="left:388px;top:1680px" width="21" height="17" viewBox="0 0 21 17"><path d="M0,0 H4 V3.8 H0 Z M6.4,0 H20.5 V3.8 H6.4 Z M0,6.8 H4 V10.6 H0 Z M6.4,6.8 H20.5 V10.6 H6.4 Z M0,13.6 H4 V17.4 H0 Z M6.4,13.6 H20.5 V17.4 H6.4 Z" fill="#afb1b3"/></svg>
<svg style="left:523px;top:1677.3px" width="21" height="21" viewBox="0 0 21 21"><circle cx="10.5" cy="10.5" r="10.5" fill="#afb1b3"/><rect x="9" y="4" width="3" height="8" fill="#3c3f41"/><rect x="9" y="14" width="3" height="3" fill="#3c3f41"/></svg>
<svg style="left:694px;top:1678px" width="22" height="20" viewBox="0 0 22 20"><rect x="0" y="0" width="22" height="20" fill="#afb1b3"/><path d="M4,5 L9,9.5 L4,14" fill="none" stroke="#3c3f41" stroke-width="2.2"/><path d="M10,15 H17" stroke="#3c3f41" stroke-width="2.2"/></svg>
<svg style="left:2817px;top:1675px" width="26" height="26"><use href="#api"/></svg>
<div class="t" id="audit" style="left:2852.9px;top:1676px;font-size:23px;line-height:26px;letter-spacing:-0.226px">Audit Problems</div>
<div class="a" style="left:0;top:1710px;width:3072px;height:40px;background:#3c3f41"></div>
<svg style="left:12px;top:1718px" width="26" height="26" viewBox="0 0 26 26"><path d="M6,1 H25 V20 H6 Z" fill="none" stroke="#afb1b3" stroke-width="2"/><path d="M1,6 V25 H20" fill="none" stroke="#afb1b3" stroke-width="2"/></svg>
<div class="t" id="stmsg" style="left:62.6px;top:1718px;font-size:23px;line-height:26px;letter-spacing:-0.074px">Compilation failed (26 minutes ago)</div>
<div class="t" id="sb0" style="left:2550.9px;top:1718px;font-size:23px;line-height:26px;letter-spacing:-1.158px">4:1</div>
<div class="t" id="sb1" style="left:2604.9px;top:1718px;font-size:23px;line-height:26px;letter-spacing:-1.870px">LF</div>
<div class="t" id="sb2" style="left:2652.8px;top:1718px;font-size:23px;line-height:26px;letter-spacing:-0.192px">UTF-8</div>
<div class="t" id="sb3" style="left:2743.5px;top:1718px;font-size:23px;line-height:26px;letter-spacing:-1.061px">Tab</div>
<div class="t" id="sb4" style="left:2836.8px;top:1718px;font-size:23px;line-height:26px;letter-spacing:-0.265px">master</div>
<svg style="left:2806px;top:1716px" width="20" height="28" viewBox="0 0 20 28"><circle cx="4" cy="4.2" r="3.8" fill="#afb1b3"/><circle cx="4" cy="24" r="3.8" fill="#afb1b3"/><circle cx="16" cy="6.5" r="3.8" fill="#afb1b3"/><path d="M4,4 V24 M16,6.5 C16,15 4,13 4,21" fill="none" stroke="#afb1b3" stroke-width="3.6"/></svg>
<svg style="left:2925px;top:1718px" width="24" height="24" viewBox="0 0 24 24"><path d="M2.6,10.5 V6 A4.6,4.6 0 0 1 11.8,6 V9" fill="none" stroke="#afb1b3" stroke-width="3.6"/><rect x="6.6" y="10" width="16.6" height="12.2" fill="#afb1b3"/></svg>
<svg style="left:2972px;top:1716px" width="32" height="31" viewBox="0 0 32 31"><circle cx="7.6" cy="15.8" r="7.6" fill="#afb1b3"/><circle cx="16" cy="9.4" r="9" fill="#afb1b3"/><circle cx="24" cy="16" r="6.4" fill="#afb1b3"/><rect x="7.6" y="15" width="17" height="8.4" fill="#afb1b3"/><text x="15.2" y="17.4" font-family="Liberation Sans" font-weight="700" font-size="18.5" text-anchor="middle" fill="#3c3f41" style="-webkit-text-stroke:0">?</text><circle cx="25" cy="23.8" r="8.4" fill="#3c3f41"/><g transform="translate(25,23.8)"><circle cx="0" cy="0" r="3.6" fill="none" stroke="#afb1b3" stroke-width="2.8"/><rect x="-1.7" y="-6.9" width="3.4" height="3.4" fill="#afb1b3" transform="rotate(0)"/><rect x="-1.7" y="-6.9" width="3.4" height="3.4" fill="#afb1b3" transform="rotate(60)"/><rect x="-1.7" y="-6.9" width="3.4" height="3.4" fill="#afb1b3" transform="rotate(120)"/><rect x="-1.7" y="-6.9" width="3.4" height="3.4" fill="#afb1b3" transform="rotate(180)"/><rect x="-1.7" y="-6.9" width="3.4" height="3.4" fill="#afb1b3" transform="rotate(240)"/><rect x="-1.7" y="-6.9" width="3.4" height="3.4" fill="#afb1b3" transform="rotate(300)"/></g></svg>
<svg style="left:3024px;top:1718px" width="24" height="24" viewBox="0 0 24 24"><circle cx="12" cy="12" r="12" fill="#57595b"/><rect x="10" y="4.6" width="4" height="9.2" fill="#3c3f41"/><rect x="10" y="15.8" width="4" height="3.8" fill="#3c3f41"/></svg>
</div>
<div class="a" style="left:0;top:0;width:3072px;height:1750px;border-radius:17px;border:2px solid #626568;border-top-color:#8e9092;box-shadow:0 0 0 2.5px #050505;pointer-events:none"></div>
</body></html>
